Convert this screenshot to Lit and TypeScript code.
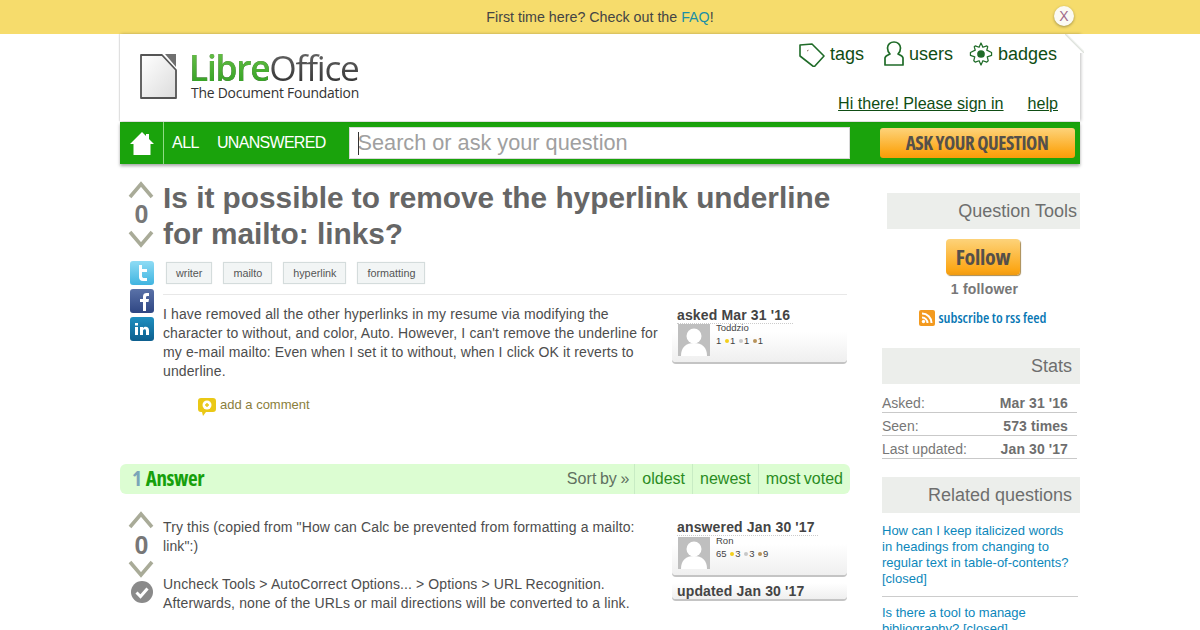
import { LitElement, html, css, svg } from "lit";
import { customElement } from "lit/decorators.js";

const up = svg`<svg class="arrow" viewBox="0 0 26 18" width="26" height="18"><path d="M2 16 13 3l11 13" fill="none" stroke="#a9ab98" stroke-width="3.6"/></svg>`;
const down = svg`<svg class="arrow down" viewBox="0 0 26 18" width="26" height="18"><path d="M2 2l11 13L24 2" fill="none" stroke="#a9ab98" stroke-width="3.6"/></svg>`;
const avatar = svg`<svg class="avatar" viewBox="0 0 32 32" width="32" height="32"><rect width="32" height="32" fill="#bfbfbf"/><circle cx="16" cy="12" r="7.5" fill="#fff"/><path d="M3 32c0-9 5-13 13-13s13 4 13 13z" fill="#fff"/></svg>`;

function meta(label: string, name: string, score: string, g: string, s: string, b: string) {
  return html`<div class="card">
    <div class="card-title"><span class="dotted">${label}</span></div>
    <div class="card-user">
      ${avatar}
      <div class="user-lines">
        <div>${name}</div>
        <div>${score} <i class="dot gold"></i>${g} <i class="dot silver"></i>${s} <i class="dot bronze"></i>${b}</div>
      </div>
    </div>
  </div>`;
}

@customElement("app-root")
export class AppRoot extends LitElement {
  static styles = css`
    :host { display: block; width: 1200px; height: 630px; overflow: hidden; background: #fff; font-family: "Liberation Sans", Arial, sans-serif; color: #4a4a4a; }
    a { color: inherit; }
    .banner { height: 34px; background: #f6dc6c; display: flex; align-items: center; justify-content: center; font-size: 14.25px; color: #444; position: relative; }
    .banner a { color: #1b8fa5; text-decoration: none; }
    .close { position: absolute; left: 1054px; top: 6px; width: 20px; height: 20px; border-radius: 50%; background: #fbfaf3; box-shadow: 0 1px 3px rgba(0,0,0,.35); color: #a06a88; font-size: 14px; line-height: 20px; text-align: center; }
    .wrap { width: 960px; margin: 0 auto; }
    .header { height: 87px; display: flex; justify-content: space-between; position: relative; background: #fff; box-shadow: 1px 0 3px rgba(0,0,0,.25), -1px 0 1px rgba(0,0,0,.08); }
    .fold { position: absolute; right: -4px; top: 0; width: 19px; height: 19px; background: linear-gradient(to top right, #fff 46%, #dfe3dd 50%, #fff 58%); }
    .logo { display: flex; gap: 10px; padding: 19px 0 0 19px; }
    .logo-words { display: flex; flex-direction: column; margin-top: -3px; }
    .logo-name { font-family: "Open Sans", sans-serif; font-size: 35.3px; line-height: 35px; letter-spacing: -1.25px; background: linear-gradient(#666, #333); -webkit-background-clip: text; background-clip: text; color: transparent; white-space: nowrap; }
    .logo-name b { font-weight: 600; background: linear-gradient(#72c84e, #2a9b1e); -webkit-background-clip: text; background-clip: text; color: transparent; }
    .logo-sub { font-family: "Open Sans", sans-serif; font-size: 13.9px; line-height: 16px; color: #333; letter-spacing: -.22px; white-space: nowrap; margin-left: 2px; }
    .head-right { display: flex; flex-direction: column; align-items: flex-end; padding: 6px 22px 0 0; }
    .tabs { display: flex; gap: 17px; font-size: 18px; line-height: 26px; color: #0f4d14; margin-right: 1px; }
    .tab { display: flex; align-items: center; gap: 5px; }
    .tab:first-child { margin-right: 3px; }
    .badge-icon { margin-left: -1px; }
    .userlinks { display: flex; gap: 24px; margin-top: 26px; font-size: 16.1px; line-height: 20px; color: #0f4d14; }
    .navbar { margin-top: 1px; height: 42px; background: #1aa30c; display: flex; align-items: center; box-shadow: 0 2px 3px rgba(0,0,0,.35); color: #fff; font-size: 16px; letter-spacing: -.5px; }
    .home { width: 43px; height: 42px; border-right: 1px solid #8fdc85; display: flex; align-items: center; justify-content: center; }
    .navlink { margin-left: 8px; }
    .navlink + .navlink { margin-left: 18px; letter-spacing: -.7px; }
    .search { margin-left: 23px; width: 501px; height: 32px; box-sizing: border-box; background: #fff; border: 1px solid #d8d8d8; color: #a0a0a0; font-size: 21.7px; line-height: 30px; letter-spacing: 0; padding-left: 8px; position: relative; }
    .caret { position: absolute; left: 8px; top: 4px; width: 1px; height: 23px; background: #333; }
    .ask { margin-left: 30px; width: 195px; height: 30px; border-radius: 3px; background: linear-gradient(#fdd37a, #fca717 80%, #f79c0c); color: #55504a; font-family: "Open Sans", sans-serif; font-weight: 700; font-stretch: 75%; font-size: 19px; letter-spacing: -.45px; display: flex; align-items: center; justify-content: center; }
    .columns { display: grid; grid-template-columns: 730px 198px; column-gap: 32px; }
    .vote { width: 43px; display: flex; flex-direction: column; align-items: center; padding-top: 1px; flex: none; }
    .vote-n { font-size: 25px; font-weight: 700; color: #777; line-height: 28px; margin-top: 1px; }
    .arrow { display: block; margin-left: -1px; }
    .arrow.down { margin-top: 2px; }
    .qhead { display: flex; padding-top: 16px; }
    h1 { margin: 0; font-size: 29.8px; line-height: 36px; color: #666; font-weight: 700; }
    .q2 { display: flex; margin-top: 9px; }
    .social { width: 43px; flex: none; display: flex; flex-direction: column; align-items: center; gap: 4px; }
    .social svg { display: block; }
    .qcol { flex: 1; margin-right: 3px; }
    .tags { display: flex; gap: 11px; padding: 1px 0 10px 3px; border-bottom: 1px solid #e8e8e8; }
    .tag { height: 20px; border: 1px solid #d4dcdc; background: #f2f5f5; font-size: 10.8px; line-height: 20px; padding: 0 9px; color: #555; box-shadow: 0 0 1px #e4e8e8; }
    .body-row { display: flex; justify-content: space-between; }
    .text { font-size: 14px; line-height: 19px; letter-spacing: .12px; color: #4d4d4d; padding-top: 10px; white-space: nowrap; }
    .text p { margin: 0; }
    .text p + p { margin-top: 19px; }
    .cards { width: 175px; padding-top: 12px; flex: none; }
    .card { border-radius: 4px; background: linear-gradient(#fff 45%, #efefef); box-shadow: 0 2px 0 #c4c4c4; padding: 0 5px 6px; margin-bottom: 8px; }
    .card-title { font-size: 14px; font-weight: 700; line-height: 16px; color: #444; letter-spacing: .15px; }
    .dotted { display: inline-block; padding-right: 3px; border-bottom: 1px dotted #ccc; }
    .card-user { display: flex; gap: 6px; }
    .avatar { display: block; margin-left: 1px; }
    .user-lines { font-size: 9.5px; line-height: 12.5px; color: #444; margin-top: -2px; }
    .dot { display: inline-block; width: 4px; height: 4px; border-radius: 50%; margin: 0 1px 1px 1px; }
    .gold { background: #f4cf1c; } .silver { background: #c8c8c8; } .bronze { background: #b8935a; }
    .comment { display: flex; align-items: center; gap: 4px; margin: 13px 0 0 35px; font-size: 13px; color: #8a7e3c; line-height: 20px; }
    .comment svg { margin-top: 4px; }
    .answers { margin-top: 48px; height: 30px; background: #dcfdd2; border-radius: 6px; display: flex; justify-content: space-between; align-items: stretch; }
    .count { padding-left: 12px; font-family: "Open Sans", sans-serif; font-stretch: 75%; font-weight: 700; font-size: 21px; line-height: 29px; color: #17a00c; letter-spacing: -.4px; word-spacing: 1px; }
    .count span { color: #7aa5b8; }
    .sort { display: flex; font-size: 16px; line-height: 30px; color: #607060; word-spacing: -1px; }
    .sort span { padding: 0 5px; letter-spacing: .05px; }
    .sort a { text-decoration: none; color: #2a8c1f; padding: 0 7px; border-left: 1px solid #c8ecc4; }
    .answer { display: flex; padding-top: 17px; }
    .avote { width: 43px; flex: none; display: flex; flex-direction: column; align-items: center; }
    .avote .vote-n { margin-top: 2px; }
    .avote .arrow.down { margin-top: 1px; }
    .check { margin-top: 3px; display: block; }
    .answer .body-row { flex: 1; margin-right: 3px; }
    .answer .text { padding-top: 7px; }
    .answer .cards { padding-top: 8px; }
    .answer .card-user { margin-top: 1px; }
    .card.small { padding: 0 5px 0; background: linear-gradient(#fff, #efefef); }
    .side { padding-top: 29px; }
    .sbox { background: #eceeeb; height: 36px; line-height: 36px; font-size: 18px; color: #6e6e6e; text-align: right; padding-right: 8px; }
    .sbox.first { margin-left: 5px; padding-right: 3px; }
    .tools { display: flex; flex-direction: column; align-items: center; padding: 10px 0 0 4px; margin-bottom: 21px; }
    .follow { width: 74px; height: 36px; box-sizing: border-box; border-radius: 4px; background: linear-gradient(#fdd37a, #fca717 85%, #f09a10); box-shadow: 1px 1px 1px #a88a50; display: flex; align-items: center; justify-content: center; font-family: "Open Sans", sans-serif; font-stretch: 75%; font-weight: 700; font-size: 22px; line-height: 34px; padding-bottom: 2px; color: #55504a; letter-spacing: -.3px; }
    .followers { margin: 6px 0 0 3px; font-size: 14px; font-weight: 700; color: #777; line-height: 16px; letter-spacing: .2px; }
    .rss { margin-top: 12px; display: flex; align-items: center; gap: 3px; font-family: "Open Sans", sans-serif; font-stretch: 75%; font-weight: 600; font-size: 14.5px; color: #0877b4; line-height: 18px; }
    .stats { margin: 7px 3px 18px 0; font-size: 14px; color: #777; }
    .stat { display: flex; justify-content: space-between; height: 22px; margin-bottom: 1px; padding-top: 2px; line-height: 20px; border-bottom: 1px solid #c9c9c9; box-sizing: border-box; white-space: nowrap; }
    .stat b { color: #6e6e6e; padding-right: 9px; letter-spacing: .1px; }
    .related { padding-top: 10px; font-size: 13px; line-height: 16px; color: #0c87bb; }
    .related a { display: block; text-decoration: none; padding-right: 6px; }
    .related a + a { border-top: 1px solid #ccc; margin-top: 9px; padding-top: 8px; margin-right: 2px; }
  `;

  render() {
    return html`
      <div class="banner">
        <span>First time here? Check out the <a href="#">FAQ</a>!</span>
        <div class="close">X</div>
      </div>
      <div class="wrap">
        <div class="header">
          <div class="fold"></div>
          <div class="logo">
            <svg width="40" height="48" viewBox="0 0 40 48">
              <defs><linearGradient id="pg" x1="0" y1="0" x2="1" y2="1"><stop offset="0" stop-color="#ffffff"/><stop offset="1" stop-color="#dcdcdc"/></linearGradient></defs>
              <path d="M2 2h21l14 15v28H2z" fill="url(#pg)" stroke="#555" stroke-width="1.800" stroke-linejoin="round"/>
              <path d="M26 1h11v13z" fill="#707070"/>
            </svg>
            <div class="logo-words">
              <div class="logo-name"><b>Libre</b>Office</div>
              <div class="logo-sub">The Document Foundation</div>
            </div>
          </div>
          <div class="head-right">
            <div class="tabs">
              <div class="tab">
                <svg width="26" height="27" viewBox="0 0 26 27"><path d="M1 5 13 4l12 12-10 11L1 16z" fill="#fff" stroke="#1f6b28" stroke-width="1.600" stroke-linejoin="round"/><path d="M8 11l1.500-.8" stroke="#8a6a5a"/></svg>
                <span>tags</span>
              </div>
              <div class="tab">
                <svg width="20" height="25" viewBox="0 0 20 25"><path d="M1 24V17c0-2 3-3 5-4-2-2-2.500-4-2.500-6C3.500 3.500 6.500 1 10 1s6.500 2.500 6.500 6c0 2-.5 4-2.500 6 2 1 5 2 5 4v7z" fill="#fff" stroke="#1f6b28" stroke-width="1.700" stroke-linejoin="round"/></svg>
                <span>users</span>
              </div>
              <div class="tab">
                <svg class="badge-icon" width="24" height="26" viewBox="0 0 25 26"><path d="M12.500 1.500l2 4.500 4-1.500 1 1-1 3.500 5 2.500v3l-4.500 1.500 1 4-1.500 1.500-4-1.500-2 4.500-2-4.500-4 1.500L5 20l1-4-4.500-1.500v-3l5-2.500-1-3.500 1-1 4 1.500z" fill="#fff" stroke="#1f6b28" stroke-width="1.300" stroke-linejoin="round"/><circle cx="12.500" cy="13" r="4" fill="#1f6b28"/></svg>
                <span>badges</span>
              </div>
            </div>
            <div class="userlinks"><a href="#">Hi there! Please sign in</a><a href="#">help</a></div>
          </div>
        </div>
        <div class="navbar">
          <div class="home">
            <svg width="26" height="25" viewBox="0 0 26 25"><path d="M13 1 1 13h3.500v11h17V13H25L20 8V3h-3v2z" fill="#fff"/></svg>
          </div>
          <span class="navlink">ALL</span>
          <span class="navlink">UNANSWERED</span>
          <div class="search"><i class="caret"></i>Search or ask your question</div>
          <div class="ask">ASK YOUR QUESTION</div>
        </div>
        <div class="columns">
          <div class="main">
            <div class="qhead">
              <div class="vote">${up}<div class="vote-n">0</div>${down}</div>
              <h1>Is it possible to remove the hyperlink underline<br />for mailto: links?</h1>
            </div>
            <div class="q2">
              <div class="social">
                <svg width="24" height="24" viewBox="0 0 24 24"><defs><linearGradient id="tw" x1="0" y1="0" x2="0" y2="1"><stop offset="0" stop-color="#8fdcf5"/><stop offset="1" stop-color="#3fb4e0"/></linearGradient></defs><rect width="24" height="24" rx="3" fill="url(#tw)"/><path d="M9 4h3v4h5v3h-5v4c0 1.500 1 2 2 2h3v3h-4c-3 0-4-2-4-4z" fill="#fff"/></svg>
                <svg width="24" height="24" viewBox="0 0 24 24"><defs><linearGradient id="fb" x1="0" y1="0" x2="0" y2="1"><stop offset="0" stop-color="#5a72a8"/><stop offset="1" stop-color="#2f4683"/></linearGradient></defs><rect width="24" height="24" rx="3" fill="url(#fb)"/><path d="M13 22v-9h-3V10h3V7.500C13 5 14.500 4 16.500 4H19v3h-1.500c-1 0-1.500.5-1.500 1.500V10h3l-.5 3H16v9z" fill="#fff"/></svg>
                <svg width="24" height="24" viewBox="0 0 24 24"><defs><linearGradient id="li" x1="0" y1="0" x2="0" y2="1"><stop offset="0" stop-color="#1f8fc0"/><stop offset="1" stop-color="#0d5f8e"/></linearGradient></defs><rect width="24" height="24" rx="3" fill="url(#li)"/><path d="M5 10h3v8H5zM5 6h3v2.500H5zM10 10h3v1.200c.7-1 1.600-1.400 2.700-1.400 2 0 3.300 1.300 3.300 3.700V18h-3v-4c0-1.200-.5-1.800-1.400-1.800-1 0-1.600.7-1.600 1.900V18h-3z" fill="#fff"/></svg>
              </div>
              <div class="qcol">
                <div class="tags">
                  <div class="tag">writer</div><div class="tag">mailto</div><div class="tag">hyperlink</div><div class="tag">formatting</div>
                </div>
                <div class="body-row">
                  <div>
                    <div class="text"><p>I have removed all the other hyperlinks in my resume via modifying the<br />character to without, and color, Auto. However, I can't remove the underline for<br />my e-mail mailto: Even when I set it to without, when I click OK it reverts to<br />underline.</p></div>
                    <div class="comment">
                      <svg width="18" height="18" viewBox="0 0 18 18"><path d="M3 0h12a3 3 0 0 1 3 3v8a3 3 0 0 1-3 3H8l-3 4-1-4H3a3 3 0 0 1-3-3V3a3 3 0 0 1 3-3z" fill="#eac816"/><circle cx="9" cy="7" r="4.500" fill="#fff"/><path d="M7 7h4M9 5v4" stroke="#eac816" stroke-width="1.400"/></svg>
                      <span>add a comment</span>
                    </div>
                  </div>
                  <div class="cards">${meta("asked Mar 31 '16", "Toddzio", "1", "1", "1", "1")}</div>
                </div>
              </div>
            </div>
            <div class="answers">
              <div class="count"><span>1</span> Answer</div>
              <div class="sort"><span>Sort by »</span><a href="#">oldest</a><a href="#">newest</a><a href="#">most voted</a></div>
            </div>
            <div class="answer">
              <div class="avote">
                ${up}<div class="vote-n">0</div>${down}
                <svg class="check" width="22" height="22" viewBox="0 0 22 22"><circle cx="11" cy="11" r="11" fill="#8a8a8a"/><path d="M5.500 11.500l4 4 7-8" fill="none" stroke="#fff" stroke-width="3"/></svg>
              </div>
              <div class="body-row">
                <div class="text">
                  <p>Try this (copied from "How can Calc be prevented from formatting a mailto:<br />link":)</p>
                  <p>Uncheck Tools > AutoCorrect Options... > Options > URL Recognition.<br />Afterwards, none of the URLs or mail directions will be converted to a link.</p>
                </div>
                <div class="cards">
                  ${meta("answered Jan 30 '17", "Ron", "65", "3", "3", "9")}
                  <div class="card small"><div class="card-title">updated Jan 30 '17</div></div>
                </div>
              </div>
            </div>
          </div>
          <div class="side">
            <div class="sbox first">Question Tools</div>
            <div class="tools">
              <div class="follow">Follow</div>
              <div class="followers">1 follower</div>
              <div class="rss">
                <svg width="16" height="16" viewBox="0 0 16 16"><rect width="16" height="16" rx="2" fill="#f39a1f"/><circle cx="4.500" cy="11.500" r="1.700" fill="#fff"/><path d="M3 7.500a5.500 5.500 0 0 1 5.500 5.500M3 3.500A9.500 9.500 0 0 1 12.500 13" fill="none" stroke="#fff" stroke-width="2"/></svg>
                <span>subscribe to rss feed</span>
              </div>
            </div>
            <div class="sbox">Stats</div>
            <div class="stats">
              <div class="stat"><span>Asked:</span><b>Mar 31 '16</b></div>
              <div class="stat"><span>Seen:</span><b>573 times</b></div>
              <div class="stat"><span>Last updated:</span><b>Jan 30 '17</b></div>
            </div>
            <div class="sbox">Related questions</div>
            <div class="related">
              <a href="#">How can I keep italicized words in headings from changing to regular text in table-of-contents? [closed]</a>
              <a href="#">Is there a tool to manage bibliography? [closed]</a>
            </div>
          </div>
        </div>
      </div>
    `;
  }
}
